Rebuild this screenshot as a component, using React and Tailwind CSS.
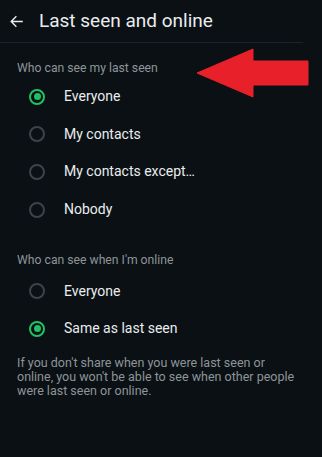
import React from "react";

function Radio({ checked }) {
  return checked ? (
    <span className="flex h-[16px] w-[16px] items-center justify-center rounded-full border-2 border-[#21c063]">
      <span className="h-[7px] w-[7px] rounded-full bg-[#21c063]" />
    </span>
  ) : (
    <span className="block h-[16px] w-[16px] rounded-full border-2 border-[#3a444b]" />
  );
}

function Row({ label, checked }) {
  return (
    <div className="flex h-[37.6px] items-center">
      <div className="flex w-[64px] justify-center pl-[10px]">
        <Radio checked={checked} />
      </div>
      <span className="text-[14px] text-[#e9edef]">{label}</span>
    </div>
  );
}

export default function App() {
  return (
    <div
      className="relative h-[457px] w-[322px] overflow-hidden bg-[#0b1014]"
      style={{ fontFamily: "Roboto, 'Noto Sans', sans-serif" }}
    >
      <div className="flex h-[42px] items-center">
        <svg className="ml-[9px]" width="15" height="15" viewBox="0 0 24 24" fill="none" stroke="#e9edef" strokeWidth="2.2" strokeLinecap="square">
          <path d="M21 12H4M11 4.5 3.5 12l7.5 7.5" />
        </svg>
        <span className="ml-[15px] text-[19px] text-[#e9edef]">Last seen and online</span>
      </div>
      <div className="h-px w-[303px] bg-[#1d2429]" />
      <div className="mt-[17px] pl-[17px] text-[12.2px] leading-[16px] text-[#8d9599]">Who can see my last seen</div>
      <div className="mt-[2px]">
        <Row label="Everyone" checked />
        <Row label="My contacts" />
        <Row label="My contacts except…" />
        <Row label="Nobody" />
      </div>
      <div className="mt-[24px] pl-[17px] text-[12.2px] leading-[16px] text-[#8d9599]">Who can see when I'm online</div>
      <div className="mt-[4px]">
        <Row label="Everyone" />
        <Row label="Same as last seen" checked />
      </div>
      <p className="ml-[17px] mt-[8px] w-[282px] text-[12.5px] leading-[14px] text-[#8d9599]">
        If you don't share when you were last seen or online, you won't be able to see when other people were last seen or online.
      </p>
      <svg className="absolute left-0 top-0" width="322" height="120" viewBox="0 0 322 120">
        <polygon points="197,73 253,49 253,61 308,61 308,85 253,85 253,97" fill="#e8202a" strokeLinejoin="round" stroke="#e8202a" strokeWidth="1" />
      </svg>
    </div>
  );
}
